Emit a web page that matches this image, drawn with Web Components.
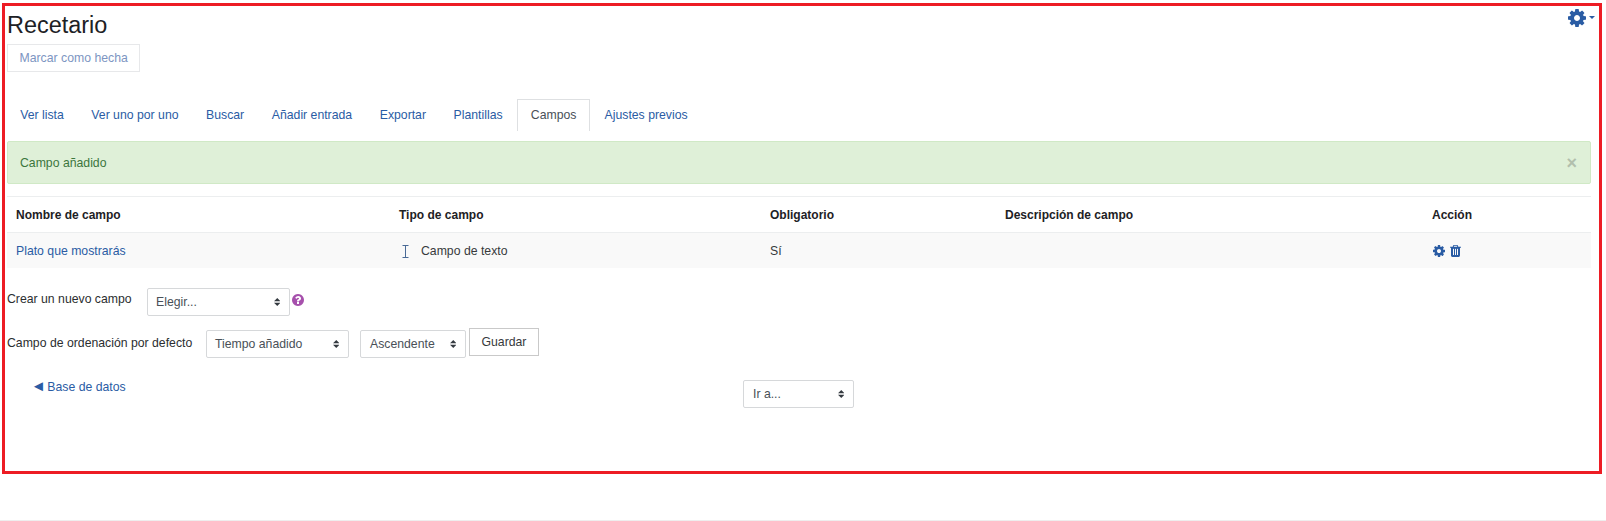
<!DOCTYPE html>
<html>
<head>
    <meta charset="utf-8" />
    <title>Recetario</title>
    <style>
        html, body { margin: 0; padding: 0; background: #fff; }
        body {
            height: 520px;
            overflow: hidden;
            border-bottom: 1px solid #eee;
            font-family: "Liberation Sans", Arial, sans-serif;
            font-size: 12.25px;
            color: #2b2e30;
        }
        a { color: #2a5ca4; text-decoration: none; }
    </style>
</head>
<body>
    <x-page>
        <x-icon slot="menu" name="cog" style="--w:18px; --h:18px; color:#2a5ca4"></x-icon>
        <x-title>Recetario</x-title>
        <x-flat-button muted>Marcar como hecha</x-flat-button>

        <x-tabs>
            <x-tab>Ver lista</x-tab>
            <x-tab>Ver uno por uno</x-tab>
            <x-tab>Buscar</x-tab>
            <x-tab>Añadir entrada</x-tab>
            <x-tab>Exportar</x-tab>
            <x-tab>Plantillas</x-tab>
            <x-tab active>Campos</x-tab>
            <x-tab>Ajustes previos</x-tab>
        </x-tabs>

        <x-alert>Campo añadido</x-alert>

        <x-table>
            <x-row head>
                <x-cell>Nombre de campo</x-cell>
                <x-cell>Tipo de campo</x-cell>
                <x-cell>Obligatorio</x-cell>
                <x-cell>Descripción de campo</x-cell>
                <x-cell>Acción</x-cell>
            </x-row>
            <x-row striped>
                <x-cell><a href="#">Plato que mostrarás</a></x-cell>
                <x-cell>
                    <x-icon name="ibeam" style="--w:7px; --h:13px; margin:1px 12px 0 3px"></x-icon>
                    Campo de texto
                </x-cell>
                <x-cell>Sí</x-cell>
                <x-cell></x-cell>
                <x-cell>
                    <x-icon name="cog" style="--w:12px; --h:12px; color:#2a5ca4; margin:1px 5px 0 1px"></x-icon>
                    <x-icon name="trash" style="--w:11px; --h:12px; color:#2a5ca4; margin-top:1px"></x-icon>
                </x-cell>
            </x-row>
        </x-table>

        <x-form-row style="margin-top:20px">
            <span class="lbl" style="width:140px; margin-top:-3px">Crear un nuevo campo</span>
            <x-select style="--w:143px; --pl:8px">Elegir...</x-select>
            <x-icon name="help" style="--w:12px; --h:12px; color:#a650ac; margin:6px 0 0 2px"></x-icon>
        </x-form-row>

        <x-form-row style="margin-top:12px">
            <span class="lbl" style="width:199px; margin-top:1px">Campo de ordenación por defecto</span>
            <x-select style="--w:143px; --pl:8px; margin:2px 11px 0 0">Tiempo añadido</x-select>
            <x-select style="--w:106px; margin:2px 3px 0 0">Ascendente</x-select>
            <x-flat-button style="width:70px; justify-content:center; padding:0">Guardar</x-flat-button>
        </x-form-row>

        <x-jump-row>
            <a slot="back" href="#"><span style="font-size:15px; line-height:12px; margin-right:1.5px">◄</span>Base de datos</a>
            <x-select style="--w:111px">Ir a...</x-select>
        </x-jump-row>
    </x-page>

<script>
const ICONS = {
    cog: ['128 128 1536 1536', '<path d="M1152 896q0-106-75-181t-181-75-181 75-75 181 75 181 181 75 181-75 75-181zm512-109v222q0 12-8 23t-20 13l-185 28q-19 54-39 91 35 50 107 138 10 12 10 25t-9 23q-27 37-99 108t-94 71q-12 0-26-9l-138-108q-44 23-91 38-16 136-29 186-7 28-36 28h-222q-14 0-24.5-8.5t-11.5-21.5l-28-184q-49-16-90-37l-141 107q-10 9-25 9-14 0-25-11-126-114-165-168-7-10-7-23 0-12 8-23 15-21 51-66.5t54-70.5q-27-50-41-99l-183-27q-13-2-21-12.5t-8-23.5v-222q0-12 8-23t19-13l186-28q14-46 39-92-40-57-107-138-10-12-10-24 0-10 9-23 26-36 98.5-107.5t94.5-71.5q13 0 26 10l138 107q44-23 91-38 16-136 29-186 7-28 36-28h222q14 0 24.5 8.5t11.5 21.5l28 184q49 16 90 37l142-107q9-9 24-9 13 0 25 10 129 119 165 170 7 8 7 22 0 12-8 23-15 21-51 66.5t-54 70.5q26 50 41 98l183 28q13 2 21 12.5t8 23.5z" fill="currentColor"/>'],
    trash: ['192 160 1408 1504', '<path d="M704 1376v-704q0-14-9-23t-23-9h-64q-14 0-23 9t-9 23v704q0 14 9 23t23 9h64q14 0 23-9t9-23zm256 0v-704q0-14-9-23t-23-9h-64q-14 0-23 9t-9 23v704q0 14 9 23t23 9h64q14 0 23-9t9-23zm256 0v-704q0-14-9-23t-23-9h-64q-14 0-23 9t-9 23v704q0 14 9 23t23 9h64q14 0 23-9t9-23zm-544-992h448l-48-117q-7-9-17-11h-317q-10 2-17 11zm928 32v64q0 14-9 23t-23 9h-96v948q0 83-47 143.5t-113 60.5h-832q-66 0-113-58.5t-47-141.5v-952h-96q-14 0-23-9t-9-23v-64q0-14 9-23t23-9h309l70-167q15-37 54-63t79-26h320q40 0 79 26t54 63l70 167h309q14 0 23 9t9 23z" fill="currentColor"/>'],
    help: ['128 128 1536 1536', '<path d="M1024 1376v-192q0-14-9-23t-23-9h-192q-14 0-23 9t-9 23v192q0 14 9 23t23 9h192q14 0 23-9t9-23zm256-672q0-88-55.5-163t-138.5-116-170-41q-243 0-371 213-15 24 8 42l132 100q7 6 19 6 16 0 25-12 53-68 86-92 34-24 86-24 48 0 85.5 26t37.5 59q0 38-20 61t-68 45q-63 28-115.5 86.5t-52.5 125.5v36q0 14 9 23t23 9h192q14 0 23-9t9-23q0-19 21.5-49.5t54.5-49.5q32-18 49-28.5t46-35 44.5-48 28-60.5 12.5-81zm384 192q0 209-103 385.5t-279.5 279.5-385.5 103-385.5-103-279.5-279.5-103-385.5 103-385.5 279.5-279.5 385.5-103 385.5 103 279.5 279.5 103 385.5z" fill="currentColor"/>'],
    ibeam: ['0 0 7 13', '<path d="M0.5 0.5h6M3.5 0.5v12M0.5 12.5h6" stroke="#4a6a96" stroke-width="1" fill="none"/>'],
    updown: ['0 0 4 5', '<path d="M2 0L0 2h4zm0 5L0 3h4z" fill="#343a40"/>']
};

function define(name, html, init) {
    const tpl = document.createElement('template');
    tpl.innerHTML = html;
    customElements.define(name, class extends HTMLElement {
        constructor () {
            super();
            this.attachShadow({mode: 'open'}).appendChild(tpl.content.cloneNode(true));
        }
        connectedCallback () {
            if (init) init(this);
        }
    });
}

define('x-icon', `
    <style>
        :host { display: inline-flex; flex: none; width: var(--w, 12px); height: var(--h, 12px); }
        svg { width: 100%; height: 100%; display: block; }
    </style>
    <svg preserveAspectRatio="none"></svg>`, (el) => {
    const [box, body] = ICONS[el.getAttribute('name')];
    const svg = el.shadowRoot.querySelector('svg');
    svg.setAttribute('viewBox', box);
    svg.innerHTML = body;
});

define('x-page', `
    <style>
        :host {
            display: block;
            position: relative;
            box-sizing: border-box;
            margin: 3px 0 0 2px;
            width: 1600px;
            height: 471px;
            border: 3px solid #ed1c24;
            padding: 0 8px 0 2px;
        }
        .menu {
            position: absolute;
            top: 3px;
            right: 4px;
            display: flex;
            align-items: center;
            gap: 3px;
        }
        .caret {
            width: 0;
            height: 0;
            margin-top: -1px;
            border: 3px solid transparent;
            border-top-color: #2a5ca4;
            border-bottom: 0;
        }
    </style>
    <div class="menu"><slot name="menu"></slot><span class="caret"></span></div>
    <slot></slot>`);

define('x-title', `
    <style>
        :host {
            display: block;
            height: 38px;
            line-height: 38px;
            font-size: 23.44px;
            color: #1d2125;
        }
    </style>
    <slot></slot>`);

define('x-flat-button', `
    <style>
        :host {
            display: inline-flex;
            box-sizing: border-box;
            height: 28px;
            align-items: center;
            padding: 0 11.5px;
            border: 1px solid #c9c9c9;
            color: #373a3c;
        }
        :host([muted]) {
            border-color: #e7e8ea;
            color: #7d95c2;
        }
    </style>
    <slot></slot>`);

define('x-tabs', `
    <style>
        :host {
            display: flex;
            height: 32px;
            margin-top: 27px;
            margin-bottom: 10px;
        }
    </style>
    <slot></slot>`);

define('x-tab', `
    <style>
        :host {
            display: flex;
            box-sizing: border-box;
            align-items: center;
            padding: 0 12.2px 2px;
            border: 1px solid transparent;
            border-bottom: 0;
            margin-right: 1.2px;
            color: #2a5ca4;
        }
        :host([active]) {
            border-color: #dee0e2;
            padding: 0 12.8px 2px;
            color: #495057;
        }
    </style>
    <slot></slot>`);

define('x-alert', `
    <style>
        :host {
            display: flex;
            box-sizing: border-box;
            height: 43px;
            align-items: center;
            justify-content: space-between;
            padding: 0 13px 0 12px;
            background: #dff0d8;
            border: 1px solid #d0e9c6;
            border-radius: 2px;
            color: #3c763d;
        }
        .close {
            font-size: 18px;
            font-weight: bold;
            line-height: 1;
            color: #b2bfad;
        }
    </style>
    <span><slot></slot></span>
    <span class="close">×</span>`);

define('x-table', `
    <style>
        :host {
            display: block;
            margin-top: 12px;
            border-top: 1px solid #eceeef;
        }
    </style>
    <slot></slot>`);

define('x-row', `
    <style>
        :host {
            display: grid;
            grid-template-columns: 383px 371px 235px 427px 168px;
            box-sizing: border-box;
            height: 36px;
            color: #373a3c;
        }
        :host([head]) {
            height: 35px;
            font-weight: bold;
            font-size: 12px;
            color: #1d2125;
        }
        :host([striped]) {
            background: #f9f9f9;
            border-top: 1px solid #eceeef;
        }
    </style>
    <slot></slot>`);

define('x-cell', `
    <style>
        :host {
            display: flex;
            align-items: center;
            padding: 0 9px;
        }
    </style>
    <slot></slot>`);

define('x-form-row', `
    <style>
        :host {
            display: flex;
            align-items: flex-start;
        }
        ::slotted(.lbl) {
            height: 28px;
            line-height: 28px;
        }
    </style>
    <slot></slot>`);

define('x-select', `
    <style>
        :host {
            display: flex;
            box-sizing: border-box;
            flex: none;
            width: var(--w, 120px);
            height: 28px;
            align-items: center;
            justify-content: space-between;
            padding: 0 9px 0 var(--pl, 9px);
            border: 1px solid #d6d8da;
            border-radius: 2px;
            background: #fff;
            color: #495057;
        }
    </style>
    <span><slot></slot></span>
    <x-icon name="updown" style="--w:6.5px; --h:8px"></x-icon>`);

define('x-jump-row', `
    <style>
        :host {
            display: grid;
            grid-template-columns: 736px auto;
            margin-top: 22px;
        }
        .back { padding-left: 24px; height: 12px; line-height: 10px; }
    </style>
    <div class="back"><slot name="back"></slot></div>
    <div><slot></slot></div>`);
</script>
</body>
</html>
